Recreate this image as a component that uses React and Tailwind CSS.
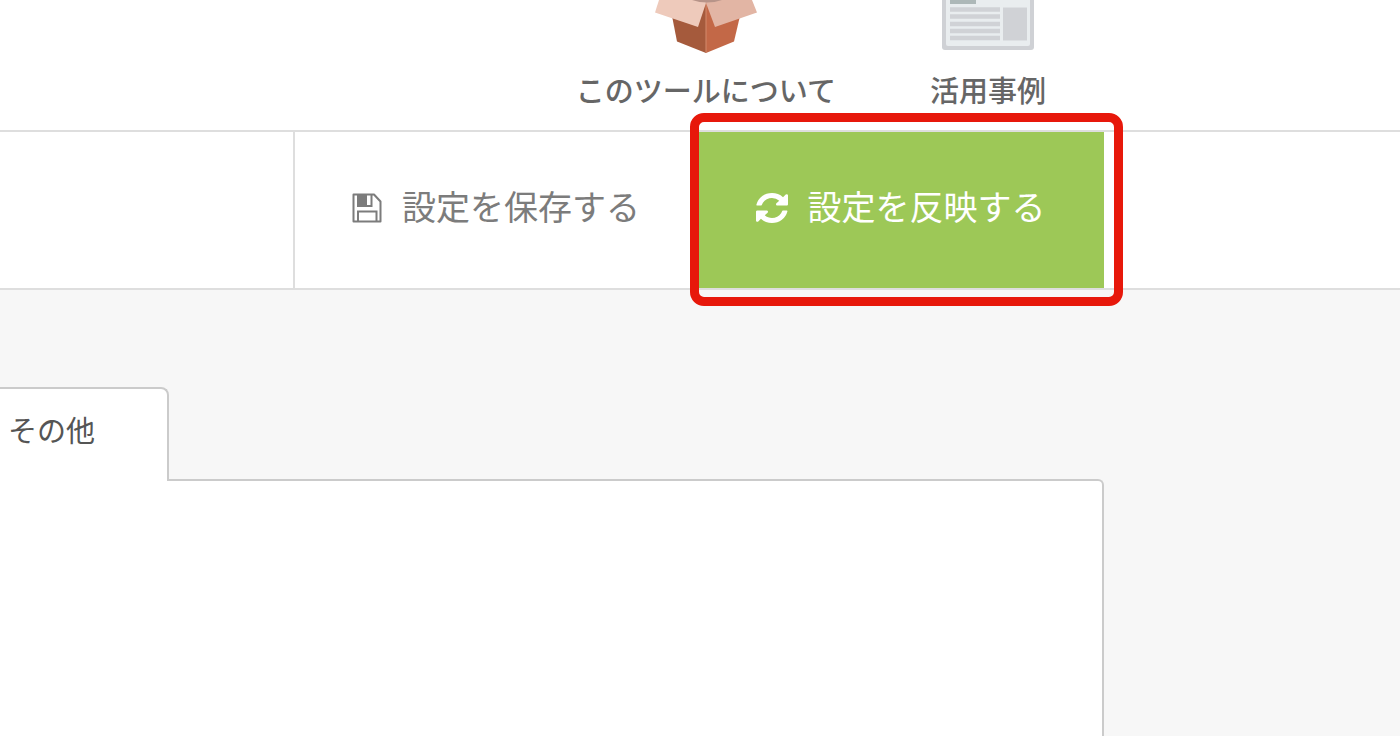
import { clsx } from "clsx";

function BoxIcon() {
  return (
    <svg width="102" height="53" viewBox="0 0 102 53" aria-hidden="true">
      <path d="M17 16 51 2v51L22 41.500z" fill="#a55a3c" />
      <path d="M85 16 51 2v51l28-11.500z" fill="#c36847" />
      <path d="M51 4v48" stroke="#d48a6d" strokeWidth="1" />
      <path d="M4 0h46l1 3-8 24L0 12.500z" fill="#eecabb" />
      <path d="M97 0H52l-1 3 9 24 42-14.500z" fill="#e2b5a4" />
      <path d="M37 0h30q-15 5-30 0z" fill="#b79489" />
    </svg>
  );
}

function NewspaperIcon() {
  return (
    <svg width="92" height="53" viewBox="0 0 92 53" aria-hidden="true">
      <path d="M0 0h92v47q0 3-3 3H3q-3 0-3-3z" fill="#cfd1d5" />
      <path d="M4 0h84v44q0 2-2 2H6q-2 0-2-2z" fill="#e9edef" />
      <path d="M8 0h26v4H8z" fill="#adb8b8" />
      <path
        d="M8 9.500h50M8 16.500h50M8 24h50M8 31h50M8 38h50"
        stroke="#d0d2d6"
        strokeWidth="4.500"
      />
      <path d="M61 7.500h24v33H61z" fill="#d0d2d6" />
    </svg>
  );
}

function SaveIcon() {
  return (
    <svg width="30" height="30" viewBox="0 0 30 30" fill="none" stroke="currentColor" strokeWidth="2" aria-hidden="true">
      <path d="M1.500 1.500h20.500l6.500 7v20h-27z" strokeLinejoin="round" />
      <path d="M6 1.500V13h13.500V1.500M6 28V18.500h18.500V28" />
      <path d="M6 1.500h9V13H6z" fill="currentColor" stroke="none" />
    </svg>
  );
}

function RefreshIcon() {
  return (
    <svg width="32" height="30" viewBox="0 0 1536 1536" preserveAspectRatio="none" fill="currentColor" aria-hidden="true">
      <path d="M1511 928q0 5-1 7-64 268-268 434.500t-478 166.500q-146 0-282.500-55t-243.500-157l-129 129q-19 19-45 19t-45-19-19-45v-448q0-26 19-45t45-19h448q26 0 45 19t19 45-19 45l-137 137q71 66 161 102t187 36q134 0 250-65t186-179q11-17 53-117 8-23 30-23h192q13 0 22.500 9.500t9.500 22.500zm25-800v448q0 26-19 45t-45 19h-448q-26 0-45-19t-19-45 19-45l138-138q-148-137-349-137-134 0-250 65t-186 179q-11 17-53 117-8 23-30 23h-199q-13 0-22.500-9.500t-9.500-22.500v-7q65-268 270-434.500t480-166.500q146 0 284 55.500t245 156.500l130-129q19-19 45-19t45 19 19 45z" />
    </svg>
  );
}

const links = [
  { label: "このツールについて", icon: BoxIcon },
  { label: "活用事例", icon: NewspaperIcon },
];

function ToolbarButton({ icon: Icon, label, className }) {
  return (
    <button
      type="button"
      className={clsx(
        "flex h-full w-full items-center justify-center gap-5 pr-0.5 pb-1 text-[34px] leading-10 whitespace-nowrap",
        className
      )}
    >
      <Icon />
      <span className="pb-1">{label}</span>
    </button>
  );
}

export default function App() {
  return (
    <div className="flex min-h-screen flex-col bg-[#f7f7f7] font-['Noto_Sans_CJK_JP',sans-serif] text-[#555]">
      <header className="border-b-2 border-[#dedede] bg-white pr-[296px]">
        <nav className="flex justify-end gap-[94px] pr-[58px]">
          {links.map(({ label, icon: Icon }) => (
            <a
              key={label}
              href="#"
              className="flex flex-col items-center gap-4 pb-[21px] text-[29px] leading-10 font-medium whitespace-nowrap text-[#666]"
            >
              <Icon />
              {label}
            </a>
          ))}
        </nav>
      </header>

      <div className="flex h-[158px] justify-end border-b-2 border-[#dedede] bg-white pr-[296px]">
        <div className="w-[406px] border-l-2 border-[#dedede]">
          <ToolbarButton icon={SaveIcon} label="設定を保存する" className="text-[#7c7c7c]" />
        </div>
        <div className="relative w-[405px]">
          <ToolbarButton icon={RefreshIcon} label="設定を反映する" className="bg-[#9dc857] text-white" />
          <span className="pointer-events-none absolute -top-[19px] -right-[19px] -bottom-[18px] -left-[9px] rounded-[14px] border-9 border-[#e7180b]" />
        </div>
      </div>

      <main className="flex flex-1 flex-col pt-[97px] pr-[296px]">
        <div className="flex">
          <button
            type="button"
            className="relative z-10 -mb-0.5 h-[94px] rounded-tr-lg border-t-2 border-r-2 border-[#cbcbcb] bg-white pr-[72px] pb-3 pl-2 text-[29px] leading-10"
          >
            その他
          </button>
        </div>
        <section className="flex-1 rounded-tr-md border-t-2 border-r-2 border-[#cbcbcb] bg-white" />
      </main>
    </div>
  );
}
